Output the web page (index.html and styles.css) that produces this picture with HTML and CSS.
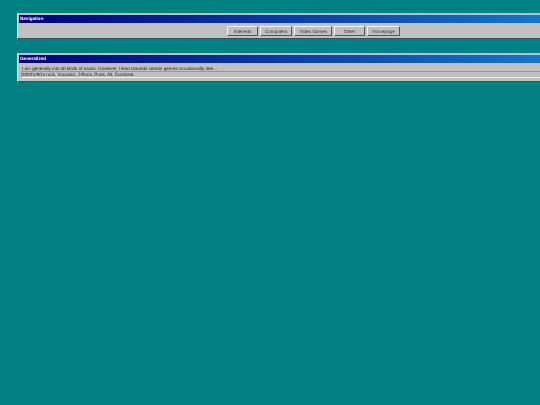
FILE: index.html
```html
<!DOCTYPE html>
<html lang="en">
<head>
<meta charset="utf-8">
<title>Home</title>
<link rel="stylesheet" href="styles.css">
</head>
<body>
<main class="desktop">
  <section class="window">
    <h2 class="title">Navigation</h2>
    <nav class="nav-body">
      <a class="btn">Interests</a>
      <a class="btn">Computers</a>
      <a class="btn">Video Games</a>
      <a class="btn">Other</a>
      <a class="btn">Homepage</a>
    </nav>
  </section>
  <section class="window">
    <h2 class="title">Generalized</h2>
    <div class="content">
      <p class="lead">I am generally into all kinds of music. However, I lean towards certain genres occasionally, like...</p>
      <p class="inset">2000's/90's rock, Vocaloid, J-Rock, Punk, Alt, Eurobeat.</p>
    </div>
  </section>
</main>
</body>
</html>
```
FILE: styles.css
```css
html, body {
  margin: 0;
  height: 100%;
  overflow: hidden;
  background: #008080;
}
.desktop {
  display: flex;
  flex-direction: column;
  gap: 14px;
  padding: 13px 0 0 17px;
  font-family: "Liberation Sans", Arial, sans-serif;
  font-size: 4.6px;
  line-height: 6px;
  color: #222;
  text-rendering: geometricPrecision;
  filter: blur(0.3px);
}
.window {
  background: #c0c0c0;
  border: 1px solid;
  border-color: #8fd0d8 transparent #405050 #c8f0f0;
  border-right: 0;
  padding: 1px 0 1px 1px;
}
.title {
  margin: 0;
  height: 8px;
  padding-left: 1px;
  font-size: 4.6px;
  line-height: 7px;
  font-weight: bold;
  color: #fff;
  background: linear-gradient(90deg, #000080, #1078cc);
}
.nav-body {
  display: flex;
  gap: 2px;
  height: 14px;
  padding: 3px 0 0 208px;
  box-sizing: border-box;
}
.btn {
  display: block;
  height: 10px;
  min-width: 31px;
  box-sizing: border-box;
  padding: 1px 4px;
  line-height: 7px;
  text-align: center;
  background: #c0c0c0;
  color: #333;
  border: 1px solid;
  border-color: #f0f0f0 #555 #555 #f0f0f0;
  white-space: nowrap;
}
.content {
  padding: 3px 0 2px 2px;
}
.lead {
  margin: 0;
  height: 5px;
  line-height: 5px;
  padding-left: 1px;
}
.inset {
  margin: 0;
  height: 5px;
  line-height: 6px;
  border-top: 1px solid #989898;
  border-left: 1px solid #989898;
  border-bottom: 1px solid #eeeeee;
}
```
